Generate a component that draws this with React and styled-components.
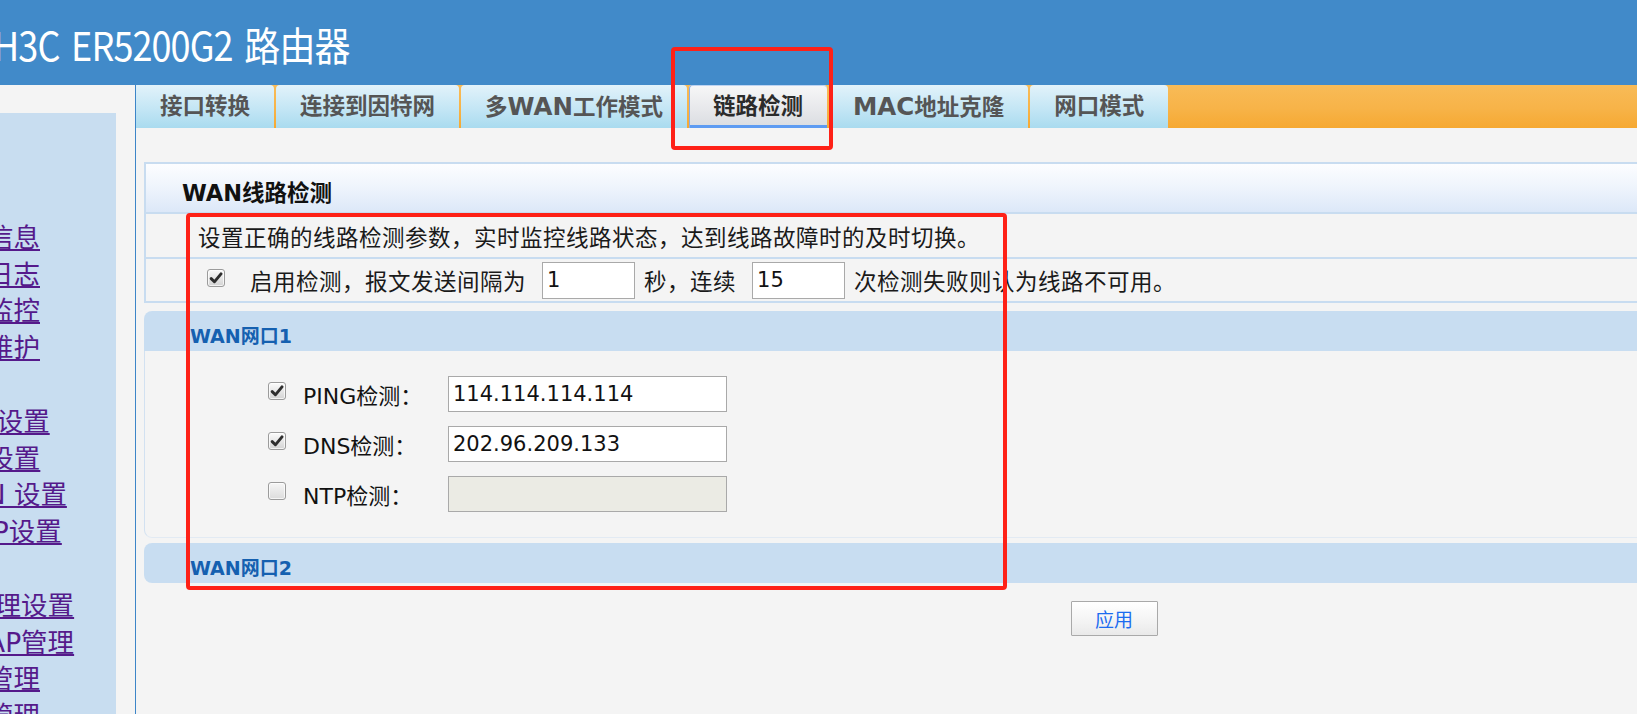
import React from 'react';
import styled, { createGlobalStyle, css } from 'styled-components';

const LATIN = `"DejaVu Sans", "Noto Sans CJK SC", sans-serif`;

const GlobalStyle = createGlobalStyle`
  html, body { margin: 0; padding: 0; overflow: hidden; background: #f4f4f4; }
  body { font-family: ${LATIN}; }
  *, *::before, *::after { box-sizing: border-box; }
`;

const Page = styled.div`
  position: relative;
  width: 1637px;
  height: 714px;
  overflow: hidden;
  background: #f4f4f4;
`;

const Header = styled.header`
  height: 85px;
  background: #418ac9;
  display: flex;
  align-items: center;
  padding-top: 3px;
`;

const Title = styled.h1`
  margin: 0 0 0 -7px;
  font: 400 40px/1 "Noto Sans CJK SC", sans-serif;
  letter-spacing: -1px;
  word-spacing: 5px;
  transform: scaleX(0.9);
  transform-origin: left center;
  color: #ffffff;
  white-space: nowrap;
`;

const Layout = styled.div`
  display: flex;
  height: 629px;
`;

const SideColumn = styled.aside`
  flex: none;
  width: 135px;
  padding-top: 28px;
`;

const SideMenu = styled.nav`
  width: 116px;
  height: 100%;
  background: #c8ddf0;
  padding-top: 107px;
`;

const MenuGroup = styled.ul`
  list-style: none;
  margin: 0;
  padding: 0;
  & + & { margin-top: 38px; }
`;

const MenuLink = styled.a`
  display: block;
  margin-left: -66px;
  white-space: nowrap;
  font: 400 26.5px/36.5px ${LATIN};
  color: #551a8b;
  text-decoration: underline;
  text-underline-offset: 2px;
`;

const Main = styled.main`
  flex: none;
  width: 1957px;
  border-left: 1px solid #3c85c8;
`;

const TabBar = styled.nav`
  display: flex;
  gap: 2px;
  height: 43px;
  background: linear-gradient(180deg, #f8bb57 0%, #f7b348 55%, #f6a932 100%);
`;

const Tab = styled.div`
  flex: none;
  padding: 0 24px;
  font: 700 22.5px/43px ${LATIN};
  color: #555555;
  white-space: nowrap;
  border-radius: 4px 4px 0 0;
  background: linear-gradient(180deg, #e2f2fa 0%, #c4e6f5 55%, #a9dbef 100%);
  &:first-child { border-top-left-radius: 0; }
  ${(p) =>
    p.$active &&
    css`
      color: #2b2b2b;
      background: linear-gradient(180deg, #f7f7f7 0%, #e6e7ea 60%, #d9dce1 100%);
      box-shadow: inset 1px 0 0 #86aeea, inset 0 1px 0 #bcd3f2, inset 0 -3px 0 #5d9bf2;
    `}
`;

const TabLatin = styled.span`
  font-size: 24.5px;
`;

const Content = styled.div`
  padding: 34px 8px 0;
`;

const Section = styled.section`
  border: 2px solid #c8dcf0;
  background: #f4f4f4;
`;

const SectionHead = styled.h2`
  margin: 0;
  height: 48px;
  padding: 5px 0 0 36px;
  display: flex;
  align-items: center;
  font: 700 22.5px ${LATIN};
  color: #111111;
  background: linear-gradient(180deg, #fcfdff 0%, #eef4fc 50%, #dce8f8 100%);
`;

const Row = styled.div`
  display: flex;
  align-items: center;
  height: ${(p) => p.$h}px;
  border-top: 2px solid #c8dcf0;
  padding-left: ${(p) => p.$pl}px;
  font: 400 22.5px ${LATIN};
  letter-spacing: 0.5px;
  color: #1a1a1a;
  white-space: nowrap;
`;

const Text = styled.span`
  margin-left: ${(p) => p.$ml || 0}px;
`;

const NumInput = styled.input`
  flex: none;
  width: 93px;
  height: 37px;
  margin: 0 9px 0 16px;
  padding: 0 0 0 4px;
  border: 1px solid #a9a9a9;
  background: #ffffff;
  font: 400 21px ${LATIN};
  letter-spacing: 0;
  color: #111;
  outline: none;
`;

const CheckBox = styled.span`
  flex: none;
  width: 18px;
  height: 18px;
  border: 1px solid #9b9b9b;
  border-radius: 3px;
  background: ${(p) =>
    p.$checked ? 'linear-gradient(180deg, #fbfbfb, #d3d3d3)' : 'linear-gradient(180deg, #f6f6f6, #dcdcdc)'};
  box-shadow: inset 0 0 0 1px rgba(255, 255, 255, 0.7);
  display: inline-flex;
  align-items: center;
  justify-content: center;
  margin-top: ${(p) => p.$mt || 0}px;
`;

const Panel = styled.section`
  margin-top: ${(p) => p.$mt}px;
`;

const PanelHead = styled.h3`
  margin: 0;
  height: 40px;
  padding: 7px 0 0 46px;
  display: flex;
  align-items: center;
  background: #c8ddf1;
  border-radius: ${(p) => (p.$closed ? '8px 0 0 8px' : '8px 0 0 0')};
  font: 700 19px ${LATIN};
  color: #1560b0;
`;

const PanelBody = styled.div`
  display: flex;
  flex-direction: column;
  gap: 14px;
  padding: 25px 0 25px 123px;
  border-left: 1px solid #d2e1f1;
  border-bottom: 1px solid #e2eaf3;
  border-bottom-left-radius: 8px;
`;

const FieldRow = styled.div`
  display: flex;
  align-items: center;
  height: 36px;
`;

const FieldLabel = styled.label`
  flex: none;
  width: 145px;
  margin-left: 17px;
  font: 400 22px ${LATIN};
  color: #111111;
  white-space: nowrap;
`;

const AddrInput = styled.input`
  flex: none;
  width: 279px;
  height: 36px;
  padding: 0 0 0 4px;
  border: 1px solid #a9a9a9;
  background: ${(p) => (p.disabled ? '#ebebe4' : '#ffffff')};
  font: 400 21px ${LATIN};
  color: #111111;
  outline: none;
`;

const Actions = styled.div`
  display: flex;
  justify-content: center;
  margin-top: 18px;
`;

const ApplyButton = styled.button`
  width: 87px;
  height: 35px;
  padding: 0;
  border: 1px solid #a9a9a9;
  border-radius: 1px;
  background: linear-gradient(180deg, #ffffff 0%, #f3f3f3 60%, #e9e9e9 100%);
  color: #1c6cf0;
  font: 400 19px "Noto Sans CJK SC", sans-serif;
  cursor: pointer;
`;

const Annotation = styled.div`
  position: absolute;
  left: ${(p) => p.$x}px;
  top: ${(p) => p.$y}px;
  width: ${(p) => p.$w}px;
  height: ${(p) => p.$h}px;
  border: 4px solid #fe2117;
  border-radius: 4px;
  pointer-events: none;
`;

const Tick = () => (
  <svg width="14" height="14" viewBox="0 0 14 14" aria-hidden="true">
    <path d="M2.2 7.6 L5.4 10.8 L12 2.8" fill="none" stroke="#2e2e2e" strokeWidth="2.9" strokeLinecap="round" strokeLinejoin="round" />
  </svg>
);

const TabLabel = ({ text }) =>
  text.split(/([A-Za-z]+)/).map((part, i) =>
    /[A-Za-z]/.test(part) ? <TabLatin key={i}>{part}</TabLatin> : <React.Fragment key={i}>{part}</React.Fragment>
  );

const menuGroups = [
  ['系统信息', '系统日志', '流量监控', '系统维护'],
  ['WAN设置', 'LAN设置', 'VLAN 设置', 'DHCP设置'],
  ['AP管理设置', '无线AP管理', '用户管理', '设备管理'],
];

const tabs = ['接口转换', '连接到因特网', '多WAN工作模式', '链路检测', 'MAC地址克隆', '网口模式'];

const fields = [
  { label: 'PING检测：', value: '114.114.114.114', checked: true },
  { label: 'DNS检测：', value: '202.96.209.133', checked: true },
  { label: 'NTP检测：', value: '', checked: false },
];

export default function App() {
  return (
    <Page>
      <GlobalStyle />
      <Header>
        <Title>H3C ER5200G2 路由器</Title>
      </Header>
      <Layout>
        <SideColumn>
          <SideMenu>
            {menuGroups.map((group, gi) => (
              <MenuGroup key={gi}>
                {group.map((item) => (
                  <li key={item}>
                    <MenuLink href="#">{item}</MenuLink>
                  </li>
                ))}
              </MenuGroup>
            ))}
          </SideMenu>
        </SideColumn>
        <Main>
          <TabBar>
            {tabs.map((t) => (
              <Tab key={t} $active={t === '链路检测'}>
                <TabLabel text={t} />
              </Tab>
            ))}
          </TabBar>
          <Content>
            <Section>
              <SectionHead>WAN线路检测</SectionHead>
              <Row $h={45} $pl={52}>
                设置正确的线路检测参数，实时监控线路状态，达到线路故障时的及时切换。
              </Row>
              <Row $h={44} $pl={61}>
                <CheckBox $checked $mt={-4}>
                  <Tick />
                </CheckBox>
                <Text $ml={25}>启用检测，报文发送间隔为</Text>
                <NumInput defaultValue="1" />
                <Text>秒，连续</Text>
                <NumInput defaultValue="15" />
                <Text>次检测失败则认为线路不可用。</Text>
              </Row>
            </Section>
            <Panel $mt={8}>
              <PanelHead>WAN网口1</PanelHead>
              <PanelBody>
                {fields.map((f) => (
                  <FieldRow key={f.label}>
                    <CheckBox $checked={f.checked} $mt={-6}>
                      {f.checked && <Tick />}
                    </CheckBox>
                    <FieldLabel>{f.label}</FieldLabel>
                    <AddrInput defaultValue={f.value} disabled={!f.checked} />
                  </FieldRow>
                ))}
              </PanelBody>
            </Panel>
            <Panel $mt={5}>
              <PanelHead $closed>WAN网口2</PanelHead>
            </Panel>
            <Actions>
              <ApplyButton>应用</ApplyButton>
            </Actions>
          </Content>
        </Main>
      </Layout>
      <Annotation $x={671} $y={47} $w={162} $h={103} />
      <Annotation $x={186} $y={213} $w={821} $h={377} />
    </Page>
  );
}
